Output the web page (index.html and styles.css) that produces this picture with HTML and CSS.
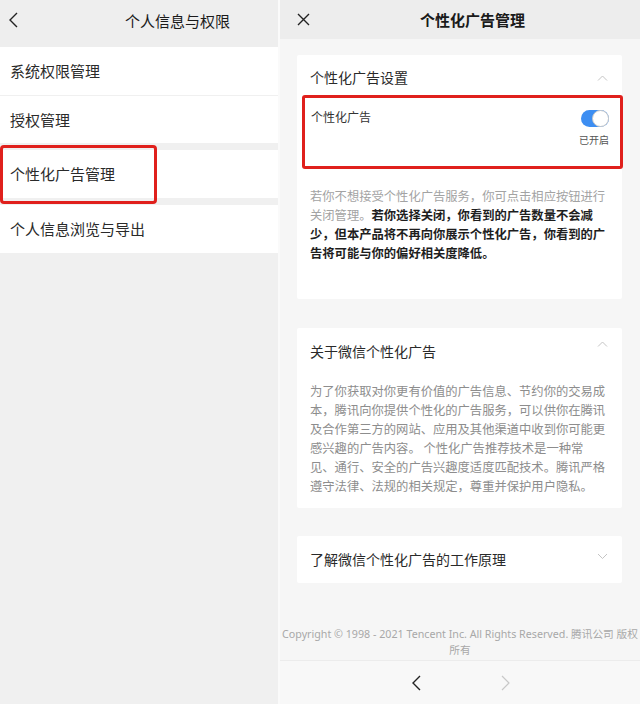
FILE: index.html
```html
<!DOCTYPE html>
<html lang="zh-CN">
<head>
<meta charset="UTF-8">
<meta name="viewport" content="width=device-width, initial-scale=1.0">
<title>个性化广告管理</title>
<link rel="stylesheet" href="styles.css">
</head>
<body>

<div class="screens">

    <!-- 左：个人信息与权限 -->
    <section class="screen left">
        <header class="bar">
            <svg class="back" width="9" height="16" viewBox="0 0 9 16"><path d="M8 1 L1 8 L8 15" fill="none" stroke="#222" stroke-width="1.4"/></svg>
            <h1>个人信息与权限</h1>
        </header>

        <div class="group">
            <div class="row">系统权限管理</div>
            <div class="row">授权管理</div>
        </div>
        <div class="group">
            <div class="row marked">个性化广告管理</div>
        </div>
        <div class="group">
            <div class="row">个人信息浏览与导出</div>
        </div>
    </section>

    <!-- 右：个性化广告管理 -->
    <section class="screen right">
        <header class="bar">
            <svg class="close" width="13" height="13" viewBox="0 0 13 13"><path d="M1 1 L12 12 M12 1 L1 12" fill="none" stroke="#222" stroke-width="1.4"/></svg>
            <h1>个性化广告管理</h1>
        </header>

        <div class="content">
            <div class="card first">
                <div class="card-head">
                    <h2>个性化广告设置</h2>
                    <svg class="chev" width="11" height="6" viewBox="0 0 11 6"><path d="M1 5.5 L5.5 1 L10 5.5" fill="none" stroke="#c4c4c4" stroke-width="1"/></svg>
                </div>
                <div class="switch-row">
                    <span class="switch-label">个性化广告</span>
                    <div class="switch-side">
                        <span class="toggle"><i></i></span>
                        <span class="state">已开启</span>
                    </div>
                </div>
                <p class="note">若你不想接受个性化广告服务，你可点击相应按钮进行关闭管理。<b>若你选择关闭，你看到的广告数量不会减少，但本产品将不再向你展示个性化广告，你看到的广告将可能与你的偏好相关度降低。</b></p>
            </div>

            <div class="card second">
                <div class="card-head">
                    <h2>关于微信个性化广告</h2>
                    <svg class="chev" width="11" height="6" viewBox="0 0 11 6"><path d="M1 5.5 L5.5 1 L10 5.5" fill="none" stroke="#c4c4c4" stroke-width="1"/></svg>
                </div>
                <p class="about">为了你获取对你更有价值的广告信息、节约你的交易成本，腾讯向你提供个性化的广告服务，可以供你在腾讯及合作第三方的网站、应用及其他渠道中收到你可能更感兴趣的广告内容。 个性化广告推荐技术是一种常见、通行、安全的广告兴趣度适度匹配技术。腾讯严格遵守法律、法规的相关规定，尊重并保护用户隐私。</p>
            </div>

            <div class="card third">
                <div class="card-head">
                    <h2>了解微信个性化广告的工作原理</h2>
                    <svg class="chev" width="11" height="6" viewBox="0 0 11 6"><path d="M1 1 L5.5 5.5 L10 1" fill="none" stroke="#c4c4c4" stroke-width="1"/></svg>
                </div>
            </div>

            <p class="copy">Copyright © 1998 - 2021 Tencent Inc. All Rights Reserved. 腾讯公司 版权所有</p>
        </div>

        <nav class="pager">
            <svg width="9" height="16" viewBox="0 0 9 16"><path d="M8 1 L1 8 L8 15" fill="none" stroke="#222" stroke-width="1.4"/></svg>
            <svg width="9" height="16" viewBox="0 0 9 16"><path d="M1 1 L8 8 L1 15" fill="none" stroke="#c8c8c8" stroke-width="1.2"/></svg>
        </nav>
    </section>

</div>

</body>
</html>
```

FILE: styles.css
```css
* { margin: 0; padding: 0; box-sizing: border-box; }
body { font-family: "Noto Sans CJK SC", "Noto Sans", sans-serif; background: #fff; color: #222; width: 640px; height: 704px; overflow: hidden; }

.screens { display: flex; gap: 2px; height: 704px; background: #fafafa; }
.screen { display: flex; flex-direction: column; height: 100%; }
.left { width: 278px; background: #f0f0f0; }
.right { flex: 1; background: #f6f6f6; }

.bar { display: flex; align-items: center; flex-shrink: 0; }
.bar h1 { font-size: 15px; font-weight: 400; color: #1a1a1a; }

/* 左屏 */
.left .bar { height: 47px; background: #eeeeee; padding-left: 9px; padding-bottom: 7px; }
.left .bar h1 { margin-left: 107px; }
.group { background: #fff; margin-bottom: 7px; }
.row { height: 48px; line-height: 48px; padding-left: 10px; font-size: 15px; color: #2a2a2a; }
.row + .row { border-top: 1px solid #f0f0f0; }
.row.marked { position: relative; }
.row.marked::after { content: ""; position: absolute; left: 0; top: -5px; width: 151px; bottom: -6px; border: 3px solid #e0201c; border-radius: 4px; }

/* 右屏 */
.right .bar { height: 39px; background: #ededed; padding-left: 17px; }
.right .bar h1 { font-weight: 600; margin-left: 110px; }

.content { flex: 1; padding: 16px 18px 0 17px; }
.card { background: #fff; border-radius: 2px; padding: 0 16px 0 13px; }
.card-head { display: flex; justify-content: space-between; }
.card h2 { font-size: 14px; font-weight: 400; line-height: 20px; color: #2a2a2a; }
.chev { margin-top: 8px; margin-right: -2px; }

.first { padding-top: 12px; padding-bottom: 36px; }
.switch-row { display: flex; justify-content: space-between; margin: 8px -17px 0 -8px; height: 74px; border: 3px solid #e0201c; border-radius: 3px; padding: 10px 11px 0 6px; }
.switch-label { font-size: 12px; line-height: 17px; color: #333; }
.switch-side { display: flex; flex-direction: column; align-items: flex-end; gap: 6px; padding-top: 2px; }
.toggle { display: block; width: 28px; height: 17px; border-radius: 9px; background: #3d8ef2; position: relative; }
.toggle i { position: absolute; right: 0; top: 0; width: 17px; height: 17px; border-radius: 50%; background: #fff; border: 1px solid #c8c8c8; }
.state { font-size: 10px; line-height: 14px; color: #555; }
.note { margin-top: 18px; font-size: 12.3px; line-height: 19px; color: #a3a3a3; }
.note b { color: #1e1e1e; }

.second { margin-top: 29px; padding-top: 13px; padding-bottom: 12px; }
.second .chev { margin-top: 0; }
.about { margin-top: 21px; font-size: 12.3px; line-height: 19px; color: #8d8d8d; }

.third { margin-top: 28px; height: 47px; padding-top: 13px; }
.third .chev { margin-top: 4px; }

.copy { margin: 43px -18px 0 -17px; font-family: "Noto Sans", "Noto Sans CJK SC", sans-serif; font-size: 10.7px; line-height: 16px; color: #a8a8a8; text-align: center; }

.pager { height: 44px; flex-shrink: 0; border-top: 1px solid #ececec; background: #f8f8f8; display: flex; align-items: center; padding-left: 132px; gap: 80px; }
```
